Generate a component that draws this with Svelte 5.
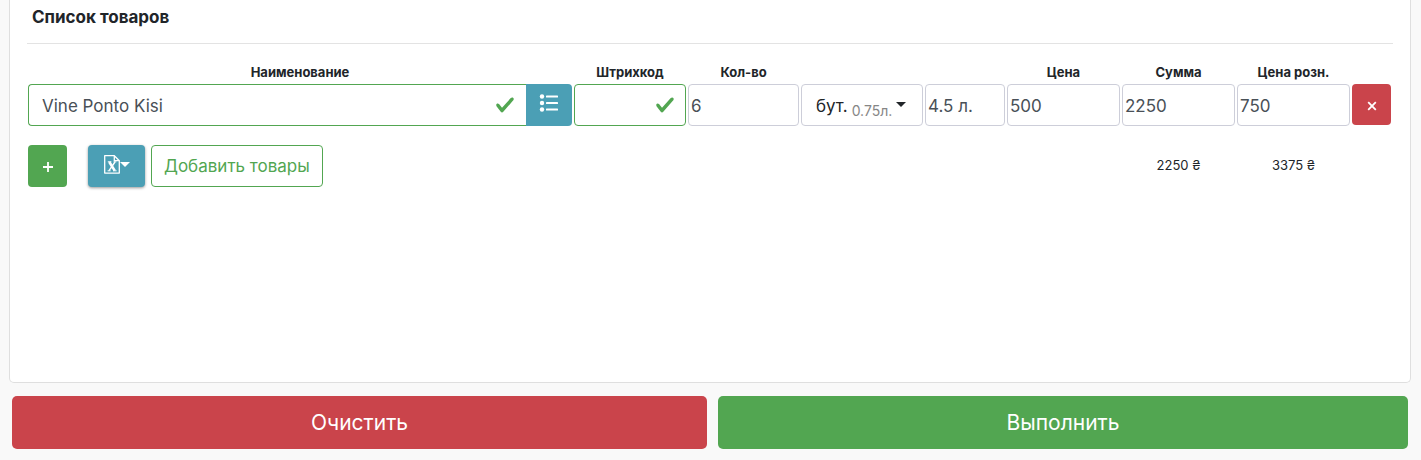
<script lang="ts">
    let name = $state('Vine Ponto Kisi');
    let barcode = $state('');
    let quantity = $state('6');
    let volume = $state('4.5 л.');
    let price = $state('500');
    let sum = $state('2250');
    let retailPrice = $state('750');

    const totals = { sum: 2250, retail: 3375 };
</script>

{#snippet check()}
    <svg class="check" viewBox="0 0 8 8" aria-hidden="true">
        <path fill="currentColor" d="M2.3 6.73L.6 4.53c-.4-1.04.46-1.4 1.1-.8l1.1 1.4 3.4-3.8c.6-.63 1.6-.27 1.2.7l-4 4.6c-.43.5-.8.4-1.1.1z" />
    </svg>
{/snippet}

<main class="page">
    <section class="card">
        <h2>Список товаров</h2>

        <table>
            <colgroup>
                <col class="col-name" />
                <col class="col-code" />
                <col class="col-quantity" />
                <col class="col-unit" />
                <col class="col-volume" />
                <col class="col-money" />
                <col class="col-money" />
                <col class="col-money" />
                <col class="col-action" />
            </colgroup>
            <thead>
                <tr>
                    <th scope="col" id="h-name">Наименование</th>
                    <th scope="col" id="h-barcode">Штрихкод</th>
                    <th scope="col" id="h-quantity">Кол-во</th>
                    <td></td>
                    <td></td>
                    <th scope="col" id="h-price">Цена</th>
                    <th scope="col" id="h-sum">Сумма</th>
                    <th scope="col" id="h-retail">Цена розн.</th>
                    <td></td>
                </tr>
            </thead>
            <tbody>
                <tr>
                    <td>
                        <div class="input-group">
                            <div class="field">
                                <input class="valid name" type="text" aria-labelledby="h-name" bind:value={name} />
                                {@render check()}
                            </div>
                            <button class="btn info pick" type="button" aria-label="Выбрать товар">
                                <svg width="20" height="18" viewBox="0 0 20 18" aria-hidden="true">
                                    <g fill="currentColor">
                                        <circle cx="3" cy="2.5" r="2.2" />
                                        <circle cx="3" cy="9" r="2.2" />
                                        <circle cx="3" cy="15.5" r="2.2" />
                                        <rect x="7" y="1.5" width="12" height="2" rx="0.6" />
                                        <rect x="7" y="8" width="12" height="2" rx="0.6" />
                                        <rect x="7" y="14.5" width="12" height="2" rx="0.6" />
                                    </g>
                                </svg>
                            </button>
                        </div>
                    </td>
                    <td>
                        <div class="field">
                            <input class="valid" type="text" aria-labelledby="h-barcode" bind:value={barcode} />
                            {@render check()}
                        </div>
                    </td>
                    <td><input type="text" aria-labelledby="h-quantity" bind:value={quantity} /></td>
                    <td>
                        <button class="unit" type="button" aria-haspopup="listbox">
                            <span>бут.</span>
                            <small>0.75л.</small>
                            <span class="caret"></span>
                        </button>
                    </td>
                    <td><input type="text" aria-label="Объём" bind:value={volume} /></td>
                    <td><input type="text" aria-labelledby="h-price" bind:value={price} /></td>
                    <td><input type="text" aria-labelledby="h-sum" bind:value={sum} /></td>
                    <td><input type="text" aria-labelledby="h-retail" bind:value={retailPrice} /></td>
                    <td>
                        <button class="btn danger square" type="button" aria-label="Удалить">
                            <svg width="10" height="10" viewBox="0 0 10 10" aria-hidden="true">
                                <path d="M1.2 1.2l7.6 7.6M8.8 1.2L1.2 8.8" stroke="currentColor" stroke-width="1.8" />
                            </svg>
                        </button>
                    </td>
                </tr>
            </tbody>
            <tfoot>
                <tr>
                    <td colspan="6">
                        <div class="toolbar">
                            <button class="btn success square add" type="button" aria-label="Добавить строку">
                                <svg width="10" height="10" viewBox="0 0 10 10" aria-hidden="true">
                                    <path d="M5 0v10M0 5h10" stroke="currentColor" stroke-width="1.8" />
                                </svg>
                            </button>
                            <button class="btn info excel" type="button" aria-label="Excel" aria-haspopup="menu">
                                <svg width="16" height="19" viewBox="0 0 16 19" aria-hidden="true">
                                    <path d="M.7.7h9.6l5 5v12.4H.7z" fill="none" stroke="currentColor" stroke-width="1.3" stroke-linejoin="round" />
                                    <path d="M10.3.7v5h5" fill="none" stroke="currentColor" stroke-width="1.3" />
                                    <path d="M5.3 7l5.4 8.6" stroke="currentColor" stroke-width="2.6" />
                                    <path d="M11 7l-6 8.6" stroke="currentColor" stroke-width="1.4" />
                                    <path d="M3.8 6.8h3.6M9.6 6.8h2.8M3.6 15.8h3M9 15.8h3.6" stroke="currentColor" stroke-width="1" />
                                </svg>
                                <span class="caret"></span>
                            </button>
                            <button class="btn outline" type="button">Добавить товары</button>
                        </div>
                    </td>
                    <td class="total">{totals.sum} ₴</td>
                    <td class="total">{totals.retail} ₴</td>
                    <td></td>
                </tr>
            </tfoot>
        </table>
    </section>

    <div class="actions">
        <button class="btn danger large clear" type="button">Очистить</button>
        <button class="btn success large submit" type="button">Выполнить</button>
    </div>
</main>

<style>
    :global(body) {
        margin: 0;
        background: #f9f9f9;
    }

    .page {
        padding: 0 10px 11px 9px;
        color: #212529;
        font: 17px/24px Inter, "Liberation Sans", sans-serif;
    }

    * {
        box-sizing: border-box;
    }

    .card {
        min-height: 383px;
        padding: 0 17px 0 16px;
        border: 1px solid #dfdfdf;
        border-top: 0;
        border-radius: 0 0 5px 5px;
        background: #fff;
    }

    h2 {
        margin: 0 0 0 1px;
        padding: 5px 5px 14px;
        border-bottom: 1px solid #e3e3e3;
        font-size: 17px;
        font-weight: 700;
        line-height: 24px;
    }

    table {
        width: 100%;
        margin-top: 20px;
        table-layout: fixed;
        border-spacing: 2px 0;
    }

    th,
    td {
        padding: 0;
        vertical-align: top;
    }

    th {
        height: 20px;
        font-size: 13px;
        font-weight: 700;
        line-height: 16px;
        text-align: center;
    }

    .col-code {
        width: 112px;
    }

    .col-quantity {
        width: 111px;
    }

    .col-unit {
        width: 122px;
    }

    .col-volume {
        width: 80px;
    }

    .col-money {
        width: 113px;
    }

    .col-action {
        width: 39px;
    }

    input,
    button {
        margin: 0;
        font: inherit;
    }

    input {
        display: block;
        width: 100%;
        height: 42px;
        padding: 2px 2px 0;
        border: 1px solid #cdced9;
        border-radius: 4px;
        background: #fff;
        color: #495057;
    }

    input.valid {
        padding-right: 40px;
        border-color: #52a651;
    }

    input.name {
        padding-left: 13px;
        border-radius: 4px 0 0 4px;
        border-right: 0;
    }

    .input-group {
        display: flex;
    }

    .field {
        position: relative;
        flex: 1;
    }

    .check {
        position: absolute;
        top: 11px;
        right: 11px;
        width: 20px;
        height: 20px;
        color: #52a651;
    }

    .btn {
        display: flex;
        align-items: center;
        justify-content: center;
        height: 42px;
        padding: 0;
        border: 0;
        border-radius: 4px;
        color: #fff;
        cursor: pointer;
    }

    .info {
        background: #4b9fb5;
    }

    .danger {
        background: #ca444b;
    }

    .success {
        background: #52a651;
    }

    .pick {
        width: 46px;
        padding-bottom: 4px;
        border-radius: 0 4px 4px 0;
    }

    .square {
        width: 39px;
        height: 41px;
        padding-top: 2px;
    }

    .add {
        height: 42px;
    }

    .outline {
        padding: 0 12px;
        border: 1px solid #52a651;
        background: #fff;
        color: #52a651;
    }

    .unit {
        display: flex;
        align-items: center;
        gap: 4px;
        width: 100%;
        height: 42px;
        padding: 2px 0 0 14px;
        border: 1px solid #cdced9;
        border-radius: 4px;
        background: #fff;
        color: #212529;
        white-space: nowrap;
        cursor: pointer;
    }

    .unit .caret {
        margin-bottom: 4px;
    }

    small {
        padding-top: 9px;
        color: #868686;
        font-size: 14px;
        line-height: 16px;
    }

    .caret {
        border: 5px solid transparent;
        border-width: 5px 5px 0;
        border-top-color: currentColor;
    }

    .toolbar {
        display: flex;
        gap: 6px;
        padding-top: 19px;
    }

    .excel {
        width: 57px;
        margin-left: 15px;
        padding-bottom: 4px;
        box-shadow: 0 1px 3px rgba(0, 0, 0, 0.4);
    }

    .total {
        padding-top: 31px;
        font-size: 13px;
        line-height: 16px;
        text-align: center;
    }

    .actions {
        display: flex;
        gap: 11px;
        padding: 13px 3px 0;
    }

    .large {
        height: 53px;
        border-radius: 5px;
        font-size: 21px;
    }

    .clear {
        flex: 139;
    }

    .submit {
        flex: 138;
    }
</style>
